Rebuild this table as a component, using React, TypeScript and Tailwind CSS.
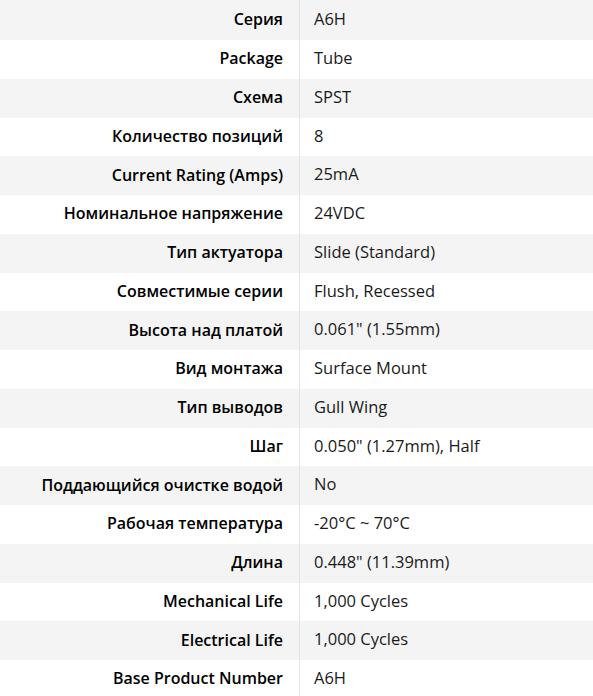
import React from "react";

const rows: [string, string][] = [
  ["Серия", "A6H"],
  ["Package", "Tube"],
  ["Схема", "SPST"],
  ["Количество позиций", "8"],
  ["Current Rating (Amps)", "25mA"],
  ["Номинальное напряжение", "24VDC"],
  ["Тип актуатора", "Slide (Standard)"],
  ["Совместимые серии", "Flush, Recessed"],
  ["Высота над платой", "0.061\" (1.55mm)"],
  ["Вид монтажа", "Surface Mount"],
  ["Тип выводов", "Gull Wing"],
  ["Шаг", "0.050\" (1.27mm), Half"],
  ["Поддающийся очистке водой", "No"],
  ["Рабочая температура", "-20°C ~ 70°C"],
  ["Длина", "0.448\" (11.39mm)"],
  ["Mechanical Life", "1,000 Cycles"],
  ["Electrical Life", "1,000 Cycles"],
  ["Base Product Number", "A6H"],
];

export default function App() {
  return (
    <div
      className="w-[593px] h-[696px] overflow-hidden bg-white text-[16px]"
      style={{ fontFamily: '"Open Sans", "Noto Sans", sans-serif' }}
    >
      {rows.map(([k, v], i) => (
        <div
          key={i}
          className={`flex ${i === 0 ? "h-[40px]" : "h-[38.75px]"} ${i % 2 === 0 ? "bg-[#f4f4f4]" : "bg-white"}`}
        >
          <div className="w-[300px] shrink-0 flex items-center justify-end pr-[16px] pb-[2px] border-r border-[#e3e3e3] font-semibold text-black whitespace-nowrap">
            {k}
          </div>
          <div className="flex-1 flex items-center pl-[14px] pb-[2px] text-[16.5px] text-[#1a1a1a] whitespace-nowrap">
            {v}
          </div>
        </div>
      ))}
    </div>
  );
}
